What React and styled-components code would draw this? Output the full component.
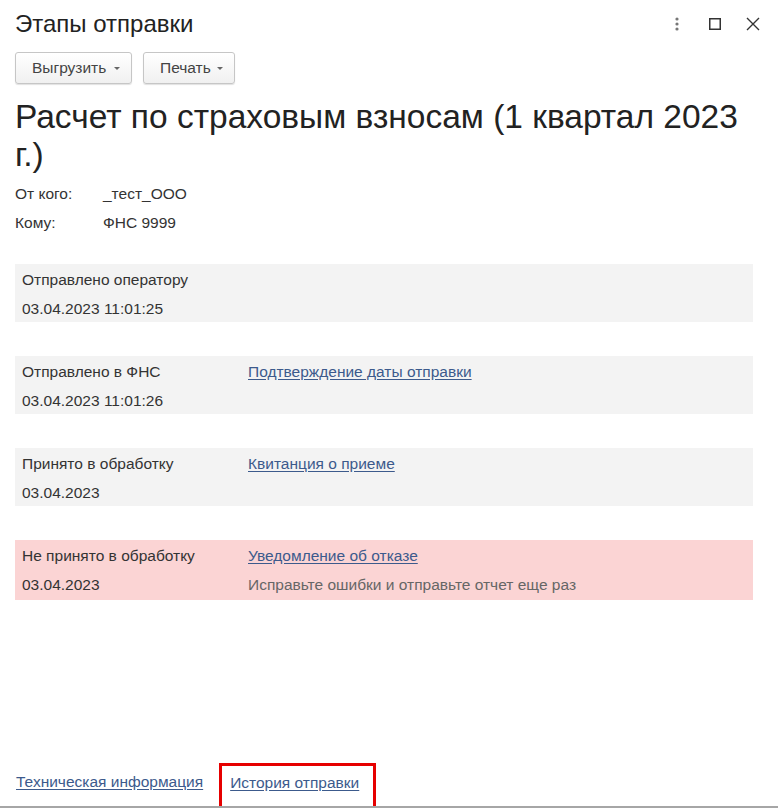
import React from "react";
import styled, { createGlobalStyle } from "styled-components";

const GlobalStyle = createGlobalStyle`
  html, body {
    margin: 0;
    padding: 0;
    background: #fff;
  }
  body {
    font-family: "Liberation Sans", Arial, sans-serif;
    color: #333;
  }
`;

const Window = styled.div`
  width: 778px;
  height: 808px;
  box-sizing: border-box;
  display: flex;
  flex-direction: column;
  background: #fff;
  border-bottom: 2px solid #a6a6a6;
`;

const Header = styled.header`
  height: 48px;
  display: flex;
  align-items: center;
  padding: 0 15px;
`;

const WindowTitle = styled.h1`
  flex: 1;
  margin: 0;
  font-size: 24px;
  font-weight: normal;
  color: #222;
`;

const HeaderIcons = styled.div`
  display: flex;
  align-items: center;
  gap: 22px;
  margin-right: 2px;
`;

const IconButton = styled.span`
  display: flex;
  width: 16px;
  height: 16px;
  align-items: center;
  justify-content: center;
`;

const Toolbar = styled.div`
  display: flex;
  gap: 11px;
  padding: 4px 15px 0;
`;

const MenuButton = styled.button`
  height: 32px;
  width: ${(p) => p.width}px;
  display: flex;
  align-items: center;
  padding: 0 0 0 16px;
  font-family: inherit;
  font-size: 15.5px;
  color: #444;
  background: linear-gradient(#ffffff, #f0f0f0);
  border: 1px solid #c6c6c6;
  border-radius: 3px;
  box-shadow: 0 1px 1px rgba(0, 0, 0, 0.12);
`;

const Caret = styled.span`
  margin-left: auto;
  margin-right: 11px;
  width: 0;
  height: 0;
  border-left: 3px solid transparent;
  border-right: 3px solid transparent;
  border-top: 3px solid #666;
`;

const Heading = styled.h2`
  margin: 14px 0 0;
  padding: 0 15px;
  font-size: 33.5px;
  line-height: 38px;
  font-weight: normal;
  color: #222;
`;

const Meta = styled.div`
  display: grid;
  grid-template-columns: 88px 1fr;
  padding: 5px 15px 0;
  font-size: 15.5px;
  line-height: 29px;
  color: #333;
`;

const Stages = styled.div`
  display: flex;
  flex-direction: column;
  gap: 34px;
  padding: 27px 25px 0 15px;
`;

const Stage = styled.div`
  display: grid;
  grid-template-columns: 226px 1fr;
  height: ${(p) => (p.error ? 60 : 58)}px;
  box-sizing: border-box;
  padding: 1px 7px 0;
  background: ${(p) => (p.error ? "#fbd4d4" : "#f3f3f3")};
  font-size: 15.5px;
  line-height: 29px;
  color: #333;
`;

const Cell = styled.div`
  display: flex;
  flex-direction: column;
`;

const Link = styled.a`
  color: #3c5a8c;
  text-decoration: underline;
  text-underline-offset: 2px;
  cursor: pointer;
`;

const Hint = styled.span`
  color: #666;
`;

const Spacer = styled.div`
  flex: 1;
`;

const Footer = styled.footer`
  display: flex;
  align-items: stretch;
  padding-left: 16px;
  height: 43px;
  font-size: 15.5px;
`;

const FooterLink = styled(Link)`
  display: flex;
  align-items: center;
  padding-bottom: 6px;
`;

const Highlight = styled.div`
  display: flex;
  margin-left: 16px;
  padding: 0 14px 0 8px;
  border: 3px solid #e60000;
  border-bottom: none;
`;

const stages = [
  { title: "Отправлено оператору", date: "03.04.2023 11:01:25" },
  {
    title: "Отправлено в ФНС",
    date: "03.04.2023 11:01:26",
    link: "Подтверждение даты отправки",
  },
  { title: "Принято в обработку", date: "03.04.2023", link: "Квитанция о приеме" },
  {
    title: "Не принято в обработку",
    date: "03.04.2023",
    link: "Уведомление об отказе",
    hint: "Исправьте ошибки и отправьте отчет еще раз",
    error: true,
  },
];

const App = () => {
  return (
    <Window>
      <GlobalStyle />
      <Header>
        <WindowTitle>Этапы отправки</WindowTitle>
        <HeaderIcons>
          <IconButton>
            <svg width="4" height="14" viewBox="0 0 4 14">
              <circle cx="2" cy="2" r="1.6" fill="#777" />
              <circle cx="2" cy="7" r="1.6" fill="#777" />
              <circle cx="2" cy="12" r="1.6" fill="#777" />
            </svg>
          </IconButton>
          <IconButton>
            <svg width="12" height="12" viewBox="0 0 12 12">
              <rect x="0.75" y="0.75" width="10.5" height="10.5" fill="none" stroke="#333" strokeWidth="1.5" />
            </svg>
          </IconButton>
          <IconButton>
            <svg width="14" height="14" viewBox="0 0 14 14">
              <path d="M1 1L13 13M13 1L1 13" stroke="#333" strokeWidth="1.4" />
            </svg>
          </IconButton>
        </HeaderIcons>
      </Header>

      <Toolbar>
        <MenuButton width={117}>
          Выгрузить
          <Caret />
        </MenuButton>
        <MenuButton width={92}>
          Печать
          <Caret />
        </MenuButton>
      </Toolbar>

      <Heading>Расчет по страховым взносам (1 квартал 2023 г.)</Heading>

      <Meta>
        <span>От кого:</span>
        <span>_тест_ООО</span>
        <span>Кому:</span>
        <span>ФНС 9999</span>
      </Meta>

      <Stages>
        {stages.map((s) => (
          <Stage key={s.title} error={s.error}>
            <Cell>
              <span>{s.title}</span>
              <span>{s.date}</span>
            </Cell>
            <Cell>
              {s.link && (
                <span>
                  <Link>{s.link}</Link>
                </span>
              )}
              {s.hint && <Hint>{s.hint}</Hint>}
            </Cell>
          </Stage>
        ))}
      </Stages>

      <Spacer />

      <Footer>
        <FooterLink>Техническая информация</FooterLink>
        <Highlight>
          <FooterLink>История отправки</FooterLink>
        </Highlight>
      </Footer>
    </Window>
  );
};

export default App;
